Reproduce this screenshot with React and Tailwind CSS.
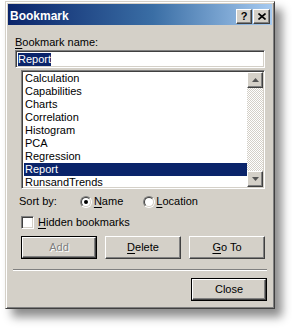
import React from "react";

const raised =
  "bg-[#d4d0c8] border border-t-white border-l-white border-r-[#404040] border-b-[#404040] shadow-[inset_-1px_-1px_#808080]";
const sunken =
  "border border-t-[#808080] border-l-[#808080] border-r-white border-b-white shadow-[inset_1px_1px_#404040,inset_-1px_-1px_#d4d0c8]";

function U({ children }) {
  return <span className="underline underline-offset-[2px]">{children}</span>;
}

function Radio({ checked }) {
  return (
    <div className="w-[12px] h-[12px] rounded-full border border-t-[#808080] border-l-[#808080] border-r-white border-b-white">
      <div className="w-full h-full rounded-full border border-t-[#404040] border-l-[#404040] border-r-[#d4d0c8] border-b-[#d4d0c8] bg-white flex items-center justify-center">
        {checked && <div className="w-[4px] h-[4px] rounded-full bg-black" />}
      </div>
    </div>
  );
}

function Button({ children, w = "w-[76px]", def, disabled }) {
  const inner = (
    <div
      className={`${raised} h-full w-full flex items-center justify-center ${
        disabled ? "text-[#808080] [text-shadow:1px_1px_#fff]" : "text-black"
      }`}
    >
      {children}
    </div>
  );
  if (def) {
    return <div className={`${w} h-[23px] border border-black`}>{inner}</div>;
  }
  return <div className={`${w} h-[23px]`}>{inner}</div>;
}

const items = [
  "Calculation",
  "Capabilities",
  "Charts",
  "Correlation",
  "Histogram",
  "PCA",
  "Regression",
  "Report",
  "RunsandTrends",
];

export default function App() {
  return (
    <div
      className="w-[292px] h-[328px] bg-white pl-[5px] pt-[1px] text-[11px] leading-[13px] text-black"
      style={{ fontFamily: '"Liberation Sans", Arial, sans-serif' }}
    >
      <div className="w-[270px] h-[308px] bg-[#d4d0c8] border border-t-[#d4d0c8] border-l-[#d4d0c8] border-r-[#404040] border-b-[#404040] shadow-[inset_1px_1px_#fff,inset_-1px_-1px_#808080,7px_8px_9px_rgba(0,0,0,0.45)] p-[2px] flex flex-col">
        {/* Title bar */}
        <div className="h-[21px] flex items-center bg-[linear-gradient(to_right,#0a246a,#3a6ea5_55%,#a6caf0)] pl-[2px] pr-[2px]">
          <span className="text-white font-bold text-[12px] mt-[3px]">Bookmark</span>
          <div className="ml-auto flex items-center mt-[3px]">
            <div className={`${raised} w-[16px] h-[15px] flex items-center justify-center`}>
              <span className="font-bold text-[11px] leading-[11px] mt-[1px]">?</span>
            </div>
            <div className={`${raised} w-[17px] h-[15px] ml-[1px] flex items-center justify-center`}>
              <svg width="8" height="7" viewBox="0 0 8 7">
                <path d="M0.5 0.5 L7.5 6.5 M7.5 0.5 L0.5 6.5" stroke="#000" strokeWidth="1.6" />
              </svg>
            </div>
          </div>
        </div>

        {/* Body */}
        <div className="flex flex-col pl-[7px]">
          <div className="mt-[11px] h-[13px]">
            <U>B</U>ookmark name:
          </div>
          <div className={`${sunken} bg-white mt-[1px] w-[250px] h-[18px] flex items-center pl-[2px]`}>
            <span className="bg-[#0a246a] text-white leading-[13px]">Report</span>
          </div>

          {/* List */}
          <div className={`${sunken} bg-white mt-[2px] ml-[6px] w-[244px] h-[119px] p-[1px] flex`}>
            <div className="flex-1 overflow-hidden flex flex-col pl-[1px]">
              {items.map((it) => (
                <div
                  key={it}
                  className={`h-[13px] shrink-0 pl-[1px] ${
                    it === "Report" ? "bg-[#0a246a] text-white" : ""
                  }`}
                >
                  {it}
                </div>
              ))}
            </div>
            <div className="w-[16px] flex flex-col">
              <div className={`${raised} w-[16px] h-[16px] flex items-center justify-center`}>
                <svg width="7" height="4" viewBox="0 0 7 4">
                  <path d="M3.5 0 L7 4 L0 4 Z" fill="#555" />
                </svg>
              </div>
              <div className="flex-1 bg-[repeating-conic-gradient(#d4d0c8_0_25%,#ffffff_0_50%)] bg-[length:2px_2px]" />
              <div className={`${raised} w-[16px] h-[16px] flex items-center justify-center`}>
                <svg width="7" height="4" viewBox="0 0 7 4">
                  <path d="M0 0 L7 0 L3.5 4 Z" fill="#555" />
                </svg>
              </div>
            </div>
          </div>

          {/* Sort by */}
          <div className="mt-[6px] h-[13px] flex items-center">
            <span className="ml-[4px]">Sort by:</span>
            <div className="ml-[23px]">
              <Radio checked />
            </div>
            <span className="ml-[2px]">
              <U>N</U>ame
            </span>
            <div className="ml-[20px]">
              <Radio />
            </div>
            <span className="ml-[1px]">
              <U>L</U>ocation
            </span>
          </div>

          {/* Hidden bookmarks */}
          <div className="mt-[8px] h-[13px] flex items-center">
            <div className={`${sunken} bg-white w-[13px] h-[13px] ml-[6px]`} />
            <span className="ml-[4px]">
              <U>H</U>idden bookmarks
            </span>
          </div>

          {/* Buttons */}
          <div className="mt-[7px] ml-[6px] flex gap-[8px]">
            <Button def disabled>
              Add
            </Button>
            <Button>
              <U>D</U>elete
            </Button>
            <Button>
              <U>G</U>o To
            </Button>
          </div>
        </div>

        {/* Separator */}
        <div className="mt-[10px] mx-[5px] h-[2px] border-t border-t-[#808080] border-b border-b-white" />

        <div className="mt-[7px] flex justify-end pr-[5px]">
          <Button def>Close</Button>
        </div>
      </div>
    </div>
  );
}
